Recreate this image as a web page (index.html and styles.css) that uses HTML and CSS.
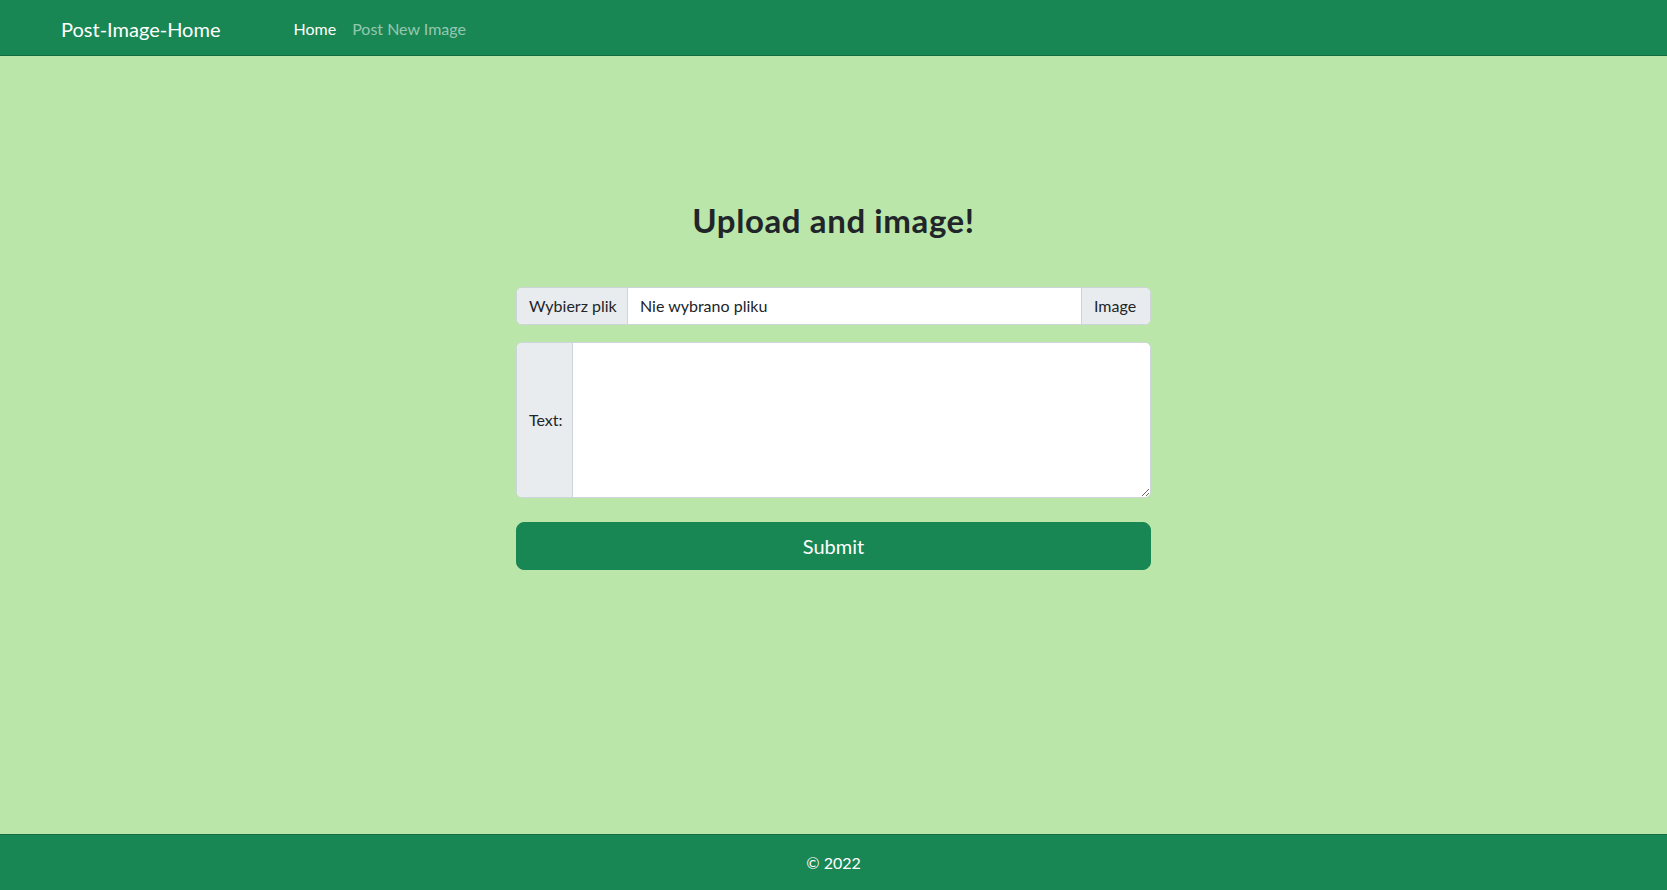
FILE: index.html
```html
<!DOCTYPE html>
<html lang="pl">
<head>
<meta charset="utf-8">
<title>Post-Image-Home</title>
<link rel="stylesheet" href="styles.css">
</head>
<body>
<nav class="navbar">
  <a class="brand" href="#">Post-Image-Home</a>
  <ul class="nav">
    <li><a class="nav-link active" href="#">Home</a></li>
    <li><a class="nav-link" href="#">Post New Image</a></li>
  </ul>
</nav>
<main class="main">
  <h1 class="title">Upload and image!</h1>
  <form class="form">
    <div class="input-group">
      <span class="file-btn">Wybierz plik</span>
      <span class="file-name">Nie wybrano pliku</span>
      <span class="addon addon-right">Image</span>
    </div>
    <div class="input-group text-group">
      <span class="addon addon-left">Text:</span>
      <textarea class="textarea"></textarea>
    </div>
    <button type="button" class="submit">Submit</button>
  </form>
</main>
<footer class="footer">© 2022</footer>
</body>
</html>
```
FILE: styles.css
```css
* { box-sizing: border-box; }
html, body { margin: 0; padding: 0; }
body {
  font-family: Lato, "Noto Sans", "Liberation Sans", sans-serif;
  font-size: 16px;
  line-height: 1.5;
  color: #212529;
  background: #bae6aa;
  min-height: 100vh;
  display: flex;
  flex-direction: column;
}
.navbar {
  height: 56px;
  background: #198754;
  border-bottom: 1px solid #146c43;
  display: flex;
  align-items: center;
  padding: 3px 0 0 61px;
}
.brand {
  color: #fff;
  font-size: 20px;
  text-decoration: none;
  margin-right: 73px;
}
.nav {
  list-style: none;
  margin: 0;
  padding: 0;
  display: flex;
  gap: 16px;
}
.nav-link {
  color: rgba(255, 255, 255, 0.55);
  text-decoration: none;
  font-size: 16px;
}
.nav-link.active { color: #fff; }
.main {
  flex: 1;
  display: flex;
  flex-direction: column;
  align-items: center;
  padding-top: 145px;
}
.title {
  margin: 0 0 46px;
  font-size: 33px;
  letter-spacing: 0.6px;
  font-weight: 700;
  line-height: 1.2;
}
.form {
  width: 635px;
  display: flex;
  flex-direction: column;
}
.input-group {
  display: flex;
  height: 38px;
  border: 1px solid #ced4da;
  border-radius: 6px;
  background: #fff;
  overflow: hidden;
  margin-bottom: 17px;
}
.file-btn {
  display: flex;
  align-items: center;
  padding: 0 12px;
  background: #e9ecef;
  border-right: 1px solid #ced4da;
  width: 111px;
  white-space: nowrap;
  flex-shrink: 0;
}
.file-name {
  flex: 1;
  display: flex;
  align-items: center;
  padding: 0 12px;
  white-space: nowrap;
}
.addon {
  display: flex;
  align-items: center;
  padding: 0 12px;
  background: #e9ecef;
  white-space: nowrap;
  flex-shrink: 0;
}
.addon-right { border-left: 1px solid #ced4da; width: 69px; }
.addon-left { border-right: 1px solid #ced4da; width: 56px; }
.text-group {
  height: 156px;
  margin-bottom: 24px;
}
.textarea {
  flex: 1;
  border: 0;
  outline: none;
  resize: vertical;
  font: inherit;
  padding: 6px 12px;
}
.submit {
  height: 48px;
  border: 1px solid #198754;
  border-radius: 8px;
  background: #198754;
  color: #fff;
  font-family: inherit;
  font-size: 20px;
  cursor: pointer;
}
.footer {
  height: 56px;
  background: #198754;
  border-top: 1px solid #146c43;
  color: #fff;
  display: flex;
  align-items: center;
  justify-content: center;
}
```
